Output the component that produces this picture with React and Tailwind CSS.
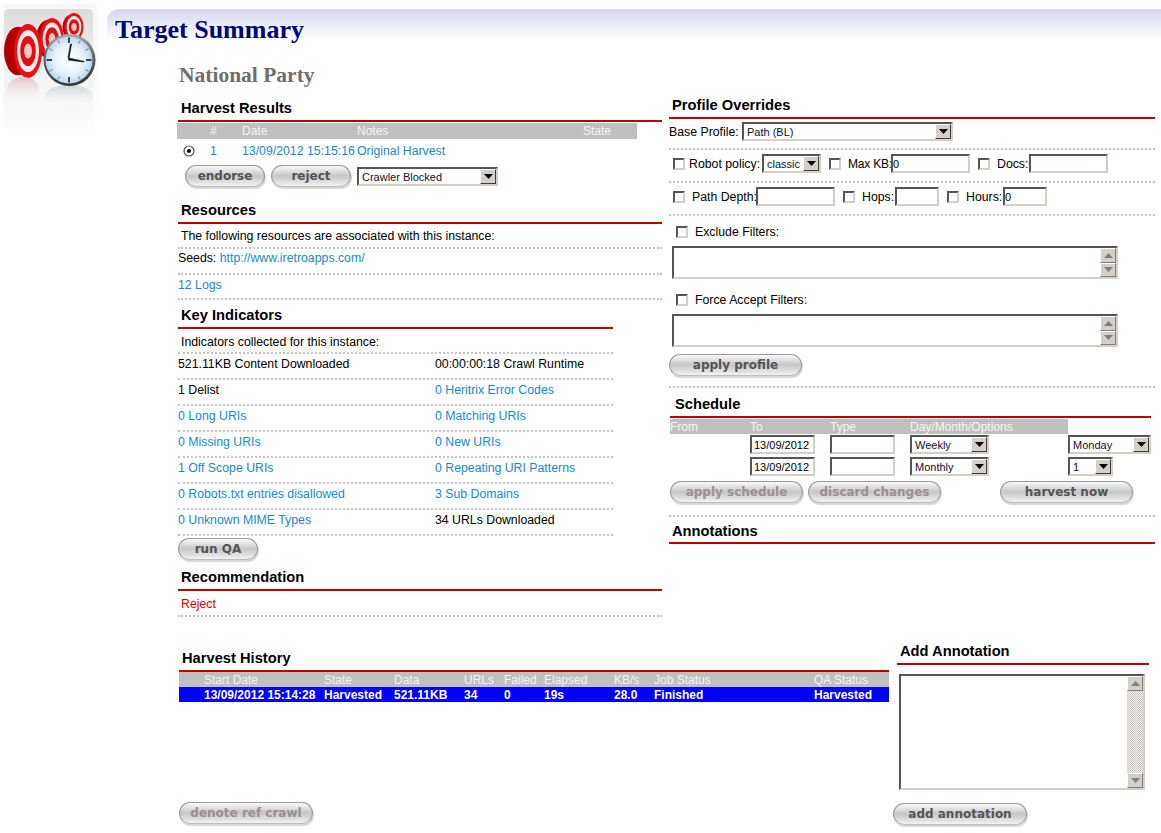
const LINK = 'text-[#1e87cc]';
const DOT = 'border-b-2 border-dotted border-[#c4c4c4]';
const SUNKEN = 'border-2 border-t-[#555555] border-l-[#555555] border-r-[#d4d0c8] border-b-[#d4d0c8] bg-white';
const BODY = 'text-[12.3px] leading-[14px]';

function Logo() {
  const target = (id, cx, cy, rx, ry, depth) => (
    <g key={id}>
      <ellipse cx={cx - depth} cy={cy} rx={rx} ry={ry * 0.9} fill="#b00000" />
      <path d={`M${cx} ${cy - ry} C${cx - depth} ${cy - ry} ${cx - depth} ${cy + ry} ${cx} ${cy + ry} Z`} fill="#b00000" />
      <ellipse cx={cx} cy={cy} rx={rx} ry={ry} fill="#ee0f12" />
      <ellipse cx={cx} cy={cy} rx={rx * 0.78} ry={ry * 0.78} fill="#f4ecec" />
      <ellipse cx={cx} cy={cy} rx={rx * 0.56} ry={ry * 0.56} fill="#e30d10" />
      <ellipse cx={cx} cy={cy} rx={rx * 0.28} ry={ry * 0.28} fill="#f0c8c8" />
    </g>
  );
  const ticks = [];
  for (let i = 0; i < 12; i++) {
    const a = (i * Math.PI) / 6;
    const major = i % 3 === 0;
    const r1 = major ? 17 : 19;
    ticks.push(
      <line
        key={i}
        x1={69 + Math.sin(a) * r1}
        y1={60 - Math.cos(a) * r1}
        x2={69 + Math.sin(a) * 22.5}
        y2={60 - Math.cos(a) * 22.5}
        stroke={major ? '#111' : '#777'}
        strokeWidth={major ? 1.5 : 1}
      />
    );
  }
  return (
    <svg width="107" height="140" viewBox="0 0 107 140" className="block">
      <defs>
        <linearGradient id="panel" x1="0" y1="0" x2="0" y2="1">
          <stop offset="0" stopColor="#dcdcdc" />
          <stop offset="0.5" stopColor="#f2f2f2" />
          <stop offset="1" stopColor="#ffffff" />
        </linearGradient>
        <linearGradient id="edge" x1="0" y1="0" x2="0" y2="1">
          <stop offset="0" stopColor="#f0f0f0" />
          <stop offset="1" stopColor="#ffffff" />
        </linearGradient>
        <linearGradient id="reflect" x1="0" y1="0" x2="0" y2="1">
          <stop offset="0" stopColor="#e8c4c4" />
          <stop offset="1" stopColor="#f6f4f4" stopOpacity="0" />
        </linearGradient>
        <linearGradient id="reflectBlue" x1="0" y1="0" x2="0" y2="1">
          <stop offset="0" stopColor="#ccd6dc" />
          <stop offset="1" stopColor="#f6f6f6" stopOpacity="0" />
        </linearGradient>
        <radialGradient id="face" cx="0.5" cy="0.5" r="0.6">
          <stop offset="0" stopColor="#ffffff" />
          <stop offset="0.55" stopColor="#e4f1fa" />
          <stop offset="1" stopColor="#9ac8e8" />
        </radialGradient>
        <linearGradient id="bezel" x1="0" y1="0" x2="0" y2="1">
          <stop offset="0" stopColor="#a8a8a8" />
          <stop offset="0.5" stopColor="#5a5a5a" />
          <stop offset="1" stopColor="#333333" />
        </linearGradient>
      </defs>
      <rect x="1" y="4" width="97" height="134" rx="6" fill="url(#edge)" opacity="0.5" />
      <rect x="4" y="9" width="89" height="127" rx="5" fill="url(#panel)" />
      {target('c', 74, 27, 9.5, 14, 2)}
      {target('b', 52, 39, 12, 21, 4)}
      {target('a', 28, 51, 14, 27, 10)}
      <ellipse cx="23" cy="90" rx="16" ry="13" fill="url(#reflect)" />
      <ellipse cx="69" cy="96" rx="24" ry="11" fill="url(#reflectBlue)" />
      <circle cx="69.5" cy="60" r="26" fill="url(#bezel)" />
      <circle cx="69" cy="60" r="23.5" fill="url(#face)" />
      {ticks}
      <path d="M69 58 L71.5 44 L70.5 44 L68 58 Z" fill="#111" stroke="#111" strokeWidth="0.7" />
      <path d="M69 58 L84 61.5 L84 62 L68.5 60 Z" fill="#111" stroke="#111" strokeWidth="0.7" />
    </svg>
  );
}

function Heading({ children, className = '', textClass = '' }) {
  return (
    <div className={`border-b-2 border-[#c00000] pb-[3px] ${className}`}>
      <h3 className={`text-[14.7px] leading-[18px] font-bold text-black ${textClass}`}>{children}</h3>
    </div>
  );
}

function PillButton({ children, disabled, className = '' }) {
  return (
    <button
      type="button"
      className={`h-[22px] rounded-[11px] border border-[#9c9c9c] border-b-[#bdbdbd] bg-gradient-to-b from-[#fafafa] via-[#c6c6c6] to-[#f2f2f2] pb-px font-['DejaVu_Sans'] text-[12px] leading-[18px] font-bold shadow-[1px_2px_1px_#d8d8d8] ${disabled ? 'text-[#9a9090]' : 'text-[#555555]'} ${className}`}
    >
      {children}
    </button>
  );
}

function Arrow({ up }) {
  return (
    <svg width="9" height="5" viewBox="0 0 9 5" className="block">
      <path d={up ? 'M4.5 0 L9 5 L0 5 Z' : 'M0 0 L9 0 L4.5 5 Z'} fill="currentColor" />
    </svg>
  );
}

function Select({ value, className = '' }) {
  return (
    <div className={`flex h-[19px] items-stretch ${SUNKEN} ${className}`}>
      <span className="flex-1 truncate pl-[3px] text-[11px] leading-[16px] text-[#101030]">{value}</span>
      <span className="flex w-[16px] items-center justify-center border border-t-white border-l-white border-r-[#404040] border-b-[#404040] bg-[#d4d0c8] text-black">
        <Arrow />
      </span>
    </div>
  );
}

function TextInput({ value = '', className = '' }) {
  return (
    <input
      readOnly
      value={value}
      className={`h-[19px] ${SUNKEN} text-[11px] leading-[14px] text-black outline-none ${className}`}
    />
  );
}

function Check({ className = '' }) {
  return <input type="checkbox" readOnly className={`h-[12px] w-[12px] shrink-0 appearance-none ${SUNKEN} ${className}`} />;
}

function ScrollBtn({ up }) {
  return (
    <span className="flex h-[15px] items-center justify-center border border-t-white border-l-white border-r-[#808080] border-b-[#808080] bg-[#d4d0c8] text-[#808080]">
      <Arrow up={up} />
    </span>
  );
}

function TextArea({ className = '', hatch }) {
  return (
    <div className={`flex ${SUNKEN} ${className}`}>
      <textarea readOnly className="min-w-0 flex-1 resize-none outline-none" />
      <div className={`flex w-[16px] flex-col justify-between ${hatch ? 'bg-[repeating-conic-gradient(#c8c4bc_0_25%,#f6f6f2_0_50%)] bg-[length:2px_2px]' : 'bg-[#e8e6e0]'}`}>
        <ScrollBtn up />
        <ScrollBtn />
      </div>
    </div>
  );
}

const indicators = [
  ['521.11KB Content Downloaded', false, '00:00:00:18 Crawl Runtime', false],
  ['1 Delist', false, '0 Heritrix Error Codes', true],
  ['0 Long URIs', true, '0 Matching URIs', true],
  ['0 Missing URIs', true, '0 New URIs', true],
  ['1 Off Scope URIs', true, '0 Repeating URI Patterns', true],
  ['0 Robots.txt entries disallowed', true, '3 Sub Domains', true],
  ['0 Unknown MIME Types', true, '34 URLs Downloaded', false],
];

function LeftColumn() {
  return (
    <div className="w-[484px]">
      <Heading className="mt-[3px]" textClass="pl-[3px]">Harvest Results</Heading>
      <div className="-ml-px mt-px grid h-[16px] w-[460px] grid-cols-[33px_32px_115px_226px_auto] bg-[#c0c0c0] text-xs leading-[17px] text-[#f4f4f4]">
        <span />
        <span>#</span>
        <span>Date</span>
        <span>Notes</span>
        <span>State</span>
      </div>
      <div className={`mt-[2px] flex h-[20px] items-center ${BODY}`}>
        <svg width="12" height="12" viewBox="0 0 12 12" className="ml-[5px] mr-[15px] shrink-0">
          <circle cx="6" cy="6" r="5" fill="#fff" stroke="#555" strokeWidth="1.2" />
          <circle cx="6" cy="6" r="2" fill="#000" />
        </svg>
        <span className={`w-[32px] ${LINK}`}>1</span>
        <span className={`w-[115px] whitespace-nowrap ${LINK}`}>13/09/2012 15:15:16</span>
        <span className={LINK}>Original Harvest</span>
      </div>
      <div className="mt-[4px] flex h-[22px] items-start pl-[7px]">
        <PillButton className="w-[80px]">endorse</PillButton>
        <PillButton className="ml-[6px] w-[80px]">reject</PillButton>
        <Select value="Crawler Blocked" className="ml-[6px] mt-[2px] w-[141px]" />
      </div>

      <Heading className="mt-[14px]" textClass="pl-[3px]">Resources</Heading>
      <div className={`h-[25px] pl-[3px] pt-[5px] ${BODY} ${DOT}`}>The following resources are associated with this instance:</div>
      <div className={`h-[26px] pt-[2px] ${BODY} ${DOT}`}>
        Seeds: <span className={LINK}>http://www.iretroapps.com/</span>
      </div>
      <div className={`h-[25px] pt-[3px] ${BODY} ${DOT} ${LINK}`}>12 Logs</div>

      <Heading className="mt-[6px] w-[435px]" textClass="pl-[3px]">Key Indicators</Heading>
      <div className={`h-[25px] w-[435px] pl-[3px] pt-[6px] ${BODY} ${DOT}`}>Indicators collected for this instance:</div>
      {indicators.map(([a, aLink, b, bLink]) => (
        <div key={a} className={`grid h-[26px] w-[435px] grid-cols-[257px_auto] pt-[3px] ${BODY} ${DOT}`}>
          <span className={aLink ? LINK : ''}>{a}</span>
          <span className={bLink ? LINK : ''}>{b}</span>
        </div>
      ))}
      <PillButton className="mt-[2px] block w-[80px]">run QA</PillButton>

      <Heading className="mt-[8px]" textClass="pl-[3px]">Recommendation</Heading>
      <div className={`h-[26px] pl-[3px] pt-[6px] ${BODY} text-[#e00000] ${DOT}`}>Reject</div>
    </div>
  );
}

function RightColumn() {
  return (
    <div className="w-[486px]">
      <Heading textClass="pl-[3px]">Profile Overrides</Heading>
      <div className={`flex h-[31px] items-start pt-[3px] ${BODY} ${DOT}`}>
        <span className="mt-[3px] w-[73px] whitespace-nowrap">Base Profile:</span>
        <Select value="Path (BL)" className="w-[211px]" />
      </div>
      <div className={`flex h-[33px] items-center pb-[4px] pl-[4px] ${BODY} ${DOT}`}>
        <Check />
        <span className="ml-[4px] w-[73px] whitespace-nowrap">Robot policy:</span>
        <Select value="classic" className="w-[59px]" />
        <Check className="ml-[8px]" />
        <span className="ml-[7px] w-[43px] whitespace-nowrap text-xs tracking-[-0.2px]">Max KB:</span>
        <TextInput value="0" className="w-[79px]" />
        <Check className="ml-[8px]" />
        <span className="ml-[7px] w-[32px] whitespace-nowrap">Docs:</span>
        <TextInput className="w-[79px]" />
      </div>
      <div className={`flex h-[33px] items-center pb-[4px] pl-[4px] ${BODY} ${DOT}`}>
        <Check />
        <span className="ml-[7px] w-[64px] whitespace-nowrap">Path Depth:</span>
        <TextInput className="w-[79px]" />
        <Check className="ml-[8px]" />
        <span className="ml-[7px] w-[33px] whitespace-nowrap">Hops:</span>
        <TextInput className="w-[44px]" />
        <Check className="ml-[8px]" />
        <span className="ml-[7px] w-[37px] whitespace-nowrap">Hours:</span>
        <TextInput value="0" className="w-[44px]" />
      </div>
      <div className={`ml-[7px] mt-[10px] flex h-[12px] items-center ${BODY}`}>
        <Check />
        <span className="ml-[7px]">Exclude Filters:</span>
      </div>
      <TextArea className="ml-[3px] mt-[8px] h-[33px] w-[446px]" />
      <div className={`ml-[7px] mt-[15px] flex h-[12px] items-center ${BODY}`}>
        <Check />
        <span className="ml-[7px]">Force Accept Filters:</span>
      </div>
      <TextArea className="ml-[3px] mt-[8px] h-[33px] w-[446px]" />
      <PillButton className="mt-[7px] block w-[133px]">apply profile</PillButton>
      <div className={`mt-[10px] h-[2px] ${DOT}`} />

      <Heading className="ml-px mt-[7px] w-[481px]" textClass="pl-[5px]">Schedule</Heading>
      <div className="ml-px mt-px grid h-[15px] w-[398px] grid-cols-[80px_80px_80px_158px] bg-[#c0c0c0] text-xs leading-[17px] text-[#f4f4f4]">
        <span>From</span>
        <span>To</span>
        <span>Type</span>
        <span>Day/Month/Options</span>
      </div>
      <div className="ml-px mt-px grid w-[481px] grid-cols-[80px_80px_80px_158px_83px] gap-y-[3px]">
        <span />
        <TextInput value="13/09/2012" className="w-[65px] pl-[2px] text-xs" />
        <TextInput className="w-[65px]" />
        <Select value="Weekly" className="w-[79px]" />
        <Select value="Monday" className="w-[83px]" />
        <span />
        <TextInput value="13/09/2012" className="w-[65px] pl-[2px] text-xs" />
        <TextInput className="w-[65px]" />
        <Select value="Monthly" className="w-[79px]" />
        <Select value="1" className="w-[45px]" />
      </div>
      <div className="ml-px mt-[5px] flex">
        <PillButton disabled className="w-[133px]">apply schedule</PillButton>
        <PillButton disabled className="ml-[5px] w-[133px]">discard changes</PillButton>
        <PillButton className="ml-[59px] w-[133px]">harvest now</PillButton>
      </div>
      <div className={`mt-[12px] h-[2px] ${DOT}`} />
      <Heading className="mt-[5px]" textClass="pl-[3px] -mb-px">Annotations</Heading>
    </div>
  );
}

const historyCols = 'grid grid-cols-[25px_120px_70px_70px_40px_40px_70px_40px_160px_auto]';

function History() {
  return (
    <div className="ml-px flex w-[710px] flex-col pt-[7px]">
      <Heading textClass="pl-[3px]">Harvest History</Heading>
      <div className={`${historyCols} h-[15px] bg-[#c0c0c0] text-xs leading-[16px] text-[#f4f4f4]`}>
        <span />
        <span>Start Date</span>
        <span>State</span>
        <span>Data</span>
        <span>URLs</span>
        <span>Failed</span>
        <span>Elapsed</span>
        <span>KB/s</span>
        <span>Job Status</span>
        <span>QA Status</span>
      </div>
      <div className={`${historyCols} h-[15px] bg-[#0000ff] text-xs leading-[16px] font-bold text-white`}>
        <span />
        <span>13/09/2012 15:14:28</span>
        <span>Harvested</span>
        <span>521.11KB</span>
        <span>34</span>
        <span>0</span>
        <span>19s</span>
        <span>28.0</span>
        <span>Finished</span>
        <span>Harvested</span>
      </div>
      <PillButton disabled className="mt-auto w-[134px]">denote ref crawl</PillButton>
    </div>
  );
}

function AddAnnotation() {
  return (
    <div className="ml-[8px] w-[252px]">
      <Heading textClass="pl-[3px]">Add Annotation</Heading>
      <TextArea hatch className="ml-[2px] mt-[9px] h-[116px] w-[246px]" />
      <PillButton className="-ml-[4px] mt-[13px] block w-[134px]">add annotation</PillButton>
    </div>
  );
}

export default function App() {
  return (
    <div className="flex h-[833px] w-[1161px] overflow-hidden bg-white font-['Liberation_Sans',Arial,sans-serif] text-xs text-black">
      <aside className="w-[107px] shrink-0">
        <Logo />
      </aside>
      <main className="min-w-0 flex-1">
        <header className="mt-[9px] h-[31px] rounded-tl-[12px] bg-gradient-to-b from-[#d5d6ec] to-white pl-[8px]">
          <h1 className="pt-[7px] font-['Liberation_Serif',serif] text-[26px] leading-[28px] font-bold text-[#000080]">Target Summary</h1>
        </header>
        <div className="pl-[71px]">
          <h2 className="ml-px mt-[24px] font-['Liberation_Serif',serif] text-[21.5px] leading-[22px] font-bold text-[#6e6e6e]">National Party</h2>
          <div className="mt-[10px] flex gap-[7px]">
            <LeftColumn />
            <RightColumn />
          </div>
          <div className="mt-[25px] flex h-[182px]">
            <History />
            <AddAnnotation />
          </div>
        </div>
      </main>
    </div>
  );
}
